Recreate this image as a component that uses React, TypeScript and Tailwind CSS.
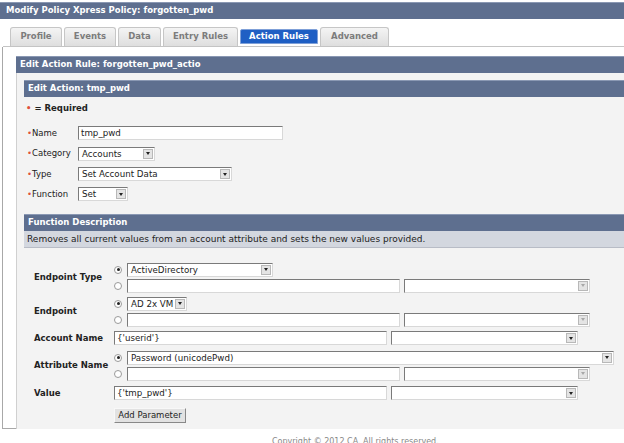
import React from 'react'

const FONT = { fontFamily: '"DejaVu Sans", Verdana, sans-serif' }

function Bar({ title, className = '' }: { title: string; className?: string }) {
  return (
    <div className={`h-[17px] bg-[#5e6f8f] border-t border-[#8a98b3] text-white font-bold text-[8.5px] leading-[15px] pl-[4px] ${className}`}>
      {title}
    </div>
  )
}

function Arrow({ dim = false }: { dim?: boolean }) {
  return (
    <div className="w-[10px] h-[10px] my-auto mr-[1px] bg-[#e4e4e4] border border-[#b8b8b8] flex items-center justify-center">
      <div
        className={`w-0 h-0 border-l-[2.5px] border-r-[2.5px] border-t-[3px] border-l-transparent border-r-transparent ${dim ? 'border-t-[#a8a8a8]' : 'border-t-[#222]'}`}
      />
    </div>
  )
}

function Select({ w, value = '', dim = false }: { w: number; value?: string; dim?: boolean }) {
  return (
    <div
      className="h-[14px] shrink-0 bg-white border border-t-[#7a7a7a] border-l-[#7a7a7a] border-r-[#d8d8d8] border-b-[#d8d8d8] flex"
      style={{ width: w }}
    >
      <div className="flex-1 text-[8.7px] leading-[12px] pl-[3px] text-[#222] overflow-hidden whitespace-nowrap">{value}</div>
      <Arrow dim={dim} />
    </div>
  )
}

function Input({ w, value = '' }: { w: number; value?: string }) {
  return (
    <div
      className="h-[14px] shrink-0 bg-white border border-t-[#7a7a7a] border-l-[#7a7a7a] border-r-[#d8d8d8] border-b-[#d8d8d8] text-[8.7px] leading-[12px] pl-[2px] text-[#222] whitespace-nowrap"
      style={{ width: w }}
    >
      {value}
    </div>
  )
}

function Radio({ checked = false }: { checked?: boolean }) {
  return (
    <div className="w-[8px] h-[8px] shrink-0 rounded-full border border-[#9a9a9a] bg-white flex items-center justify-center mr-[5px]">
      {checked && <div className="w-[3px] h-[3px] rounded-full bg-[#222]" />}
    </div>
  )
}

function FormRow({ label, children, h }: { label: string; children: React.ReactNode; h: number }) {
  return (
    <div className="flex items-center" style={{ height: h }}>
      <div className="w-[54px] shrink-0 pl-[3px] text-[8.5px] text-[#222] whitespace-nowrap">
        <span className="text-[#e0503a]">•</span>
        {label}
      </div>
      {children}
    </div>
  )
}

function RadioPair({ top, dimRight = true }: { top: React.ReactNode; dimRight?: boolean }) {
  return (
    <div className="flex flex-col gap-[2px]">
      <div className="flex items-center">
        <Radio checked />
        {top}
      </div>
      <div className="flex items-center">
        <Radio />
        <Input w={273} />
        <div className="w-[4px] shrink-0" />
        <Select w={186} dim={dimRight} />
      </div>
    </div>
  )
}

function ParamRow({ label, children, h }: { label: string; children: React.ReactNode; h: number }) {
  return (
    <div className="flex items-center" style={{ height: h }}>
      <div className="w-[90px] shrink-0 pl-[10px] text-[8.5px] font-bold text-[#222] whitespace-nowrap">{label}</div>
      {children}
    </div>
  )
}

const TABS = [
  { name: 'Profile', w: 52 },
  { name: 'Events', w: 52 },
  { name: 'Data', w: 43 },
  { name: 'Entry Rules', w: 75 },
  { name: 'Action Rules', w: 78, active: true },
  { name: 'Advanced', w: 69 },
]

export default function App() {
  return (
    <div className="w-[624px] h-[443px] bg-white overflow-hidden relative" style={FONT}>
      <div className="pt-[2px]">
        <Bar title="Modify Policy Xpress Policy: forgotten_pwd" className="pl-[6px]" />
      </div>

      {/* tabs */}
      <div className="flex gap-[2px] pl-[7px] pt-[8px] border-b border-[#c4c4c4] ml-[3px]">
        {TABS.map((t) =>
          t.active ? (
            <div
              key={t.name}
              className="h-[19px] flex items-start justify-center pt-[2px]"
              style={{ width: t.w }}
            >
              <div className="w-full h-[15px] bg-[#1f5fc4] border border-[#7fa0d8] rounded-t-[2px] text-white font-bold text-[8.5px] leading-[12px] text-center">
                {t.name}
              </div>
            </div>
          ) : (
            <div
              key={t.name}
              className="h-[19px] bg-gradient-to-b from-[#f4f4f4] to-[#dedede] border border-b-0 border-[#c6c6c6] rounded-t-[3px] text-[#7c7c7c] font-bold text-[8.5px] leading-[17px] text-center"
              style={{ width: t.w }}
            >
              {t.name}
            </div>
          )
        )}
      </div>

      {/* outer container */}
      <div className="ml-[2px] border-l border-b border-[#a8a8a8] h-[382px] pt-[9px] pl-[13px]">
        <Bar title="Edit Action Rule: forgotten_pwd_actio" />
        <div className="h-[356px] bg-[#f3f3f3] border-l border-[#d0d0d0] pl-[7px] pt-[7px]">
          <Bar title="Edit Action: tmp_pwd" />
          <div className="h-[22px] flex items-center pl-[2px] text-[8.5px] font-bold text-[#222]">
            <span className="text-[#e0503a] mr-[3px]">•</span>= Required
          </div>

          <div className="pt-[4px]">
            <FormRow label="Name" h={20}>
              <Input w={205} value="tmp_pwd" />
            </FormRow>
            <FormRow label="Category" h={21}>
              <Select w={77} value="Accounts" />
            </FormRow>
            <FormRow label="Type" h={20}>
              <Select w={154} value="Set Account Data" />
            </FormRow>
            <FormRow label="Function" h={20}>
              <Select w={50} value="Set" />
            </FormRow>
          </div>

          <Bar title="Function Description" className="mt-[10px]" />
          <div className="h-[17px] bg-[#d3d7df] border-b border-[#b8bcc6] pl-[3px] text-[9px] leading-[16px] text-[#222] whitespace-nowrap">
            Removes all current values from an account attribute and sets the new values provided.
          </div>

          <div className="pt-[13px]">
            <ParamRow label="Endpoint Type" h={33}>
              <RadioPair top={<Select w={146} value="ActiveDirectory" />} />
            </ParamRow>
            <ParamRow label="Endpoint" h={35}>
              <RadioPair top={<Select w={60} value="AD 2x VM" />} />
            </ParamRow>
            <ParamRow label="Account Name" h={18}>
              <Input w={273} value="{'userid'}" />
              <div className="w-[4px] shrink-0" />
              <Select w={187} />
            </ParamRow>
            <ParamRow label="Attribute Name" h={37}>
              <RadioPair top={<Select w={487} value="Password (unicodePwd)" />} />
            </ParamRow>
            <ParamRow label="Value" h={18}>
              <Input w={273} value="{'tmp_pwd'}" />
              <div className="w-[4px] shrink-0" />
              <Select w={187} />
            </ParamRow>
            <div className="pl-[90px] pt-[6px]">
              <div className="w-[72px] h-[15px] bg-[#e2e2e2] border border-t-[#f8f8f8] border-l-[#f8f8f8] border-r-[#888] border-b-[#888] text-[8.5px] leading-[13px] text-center text-[#222]">
                Add Parameter
              </div>
            </div>
          </div>
        </div>
      </div>

      <div className="text-[8px] text-[#888] pt-[7px] pl-[272px] whitespace-nowrap">
        Copyright © 2012 CA. All rights reserved.
      </div>
    </div>
  )
}
